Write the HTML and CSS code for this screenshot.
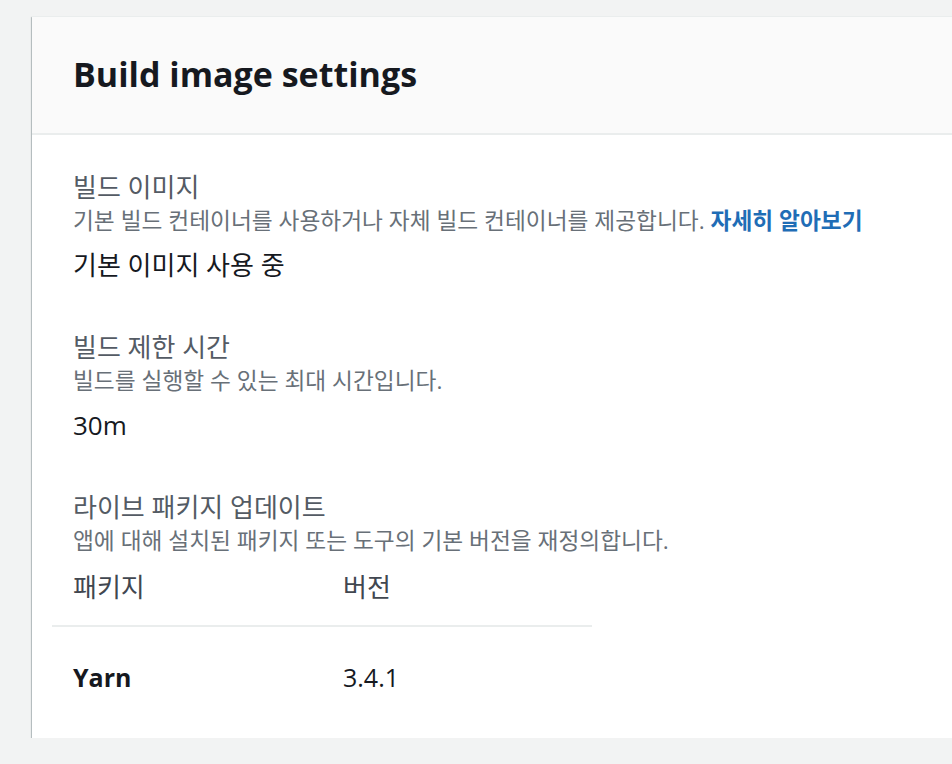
FILE: index.html
```html
<!DOCTYPE html>
<html lang="ko">

<head>
    <meta charset="UTF-8">
    <meta name="viewport" content="width=device-width, initial-scale=1.0">
    <link rel="stylesheet" href="styles.css">
    <title>Build image settings</title>
</head>

<body>
    <section class="panel">
        <div class="panel-header">
            <h2>Build image settings</h2>
        </div>
        <div class="panel-body">
            <div class="field">
                <div class="label">빌드 이미지</div>
                <div class="desc">기본 빌드 컨테이너를 사용하거나 자체 빌드 컨테이너를 제공합니다. <a href="#">자세히 알아보기</a></div>
                <div class="value">기본 이미지 사용 중</div>
            </div>
            <div class="field">
                <div class="label">빌드 제한 시간</div>
                <div class="desc">빌드를 실행할 수 있는 최대 시간입니다.</div>
                <div class="value">30m</div>
            </div>
            <div class="field">
                <div class="label">라이브 패키지 업데이트</div>
                <div class="desc">앱에 대해 설치된 패키지 또는 도구의 기본 버전을 재정의합니다.</div>
                <table class="packages">
                    <thead>
                        <tr>
                            <th>패키지</th>
                            <th>버전</th>
                        </tr>
                    </thead>
                    <tbody>
                        <tr>
                            <td class="name">Yarn</td>
                            <td>3.4.1</td>
                        </tr>
                    </tbody>
                </table>
            </div>
        </div>
    </section>
</body>

</html>
```

FILE: styles.css
```css
* {
    margin: 0;
    padding: 0;
    box-sizing: border-box;
}

html {
    overflow: hidden;
}

body {
    background-color: #f2f3f3;
    font-family: "Open Sans", "Noto Sans CJK KR", sans-serif;
    color: #16191f;
    padding: 16px 0 0 32px;
}

.panel {
    width: 1000px;
    background: #fff;
    border-top: 1px solid #eaeded;
    box-shadow: 0 2px 1px 0 rgba(0, 28, 36, 0.35), -1px 1px 1px 0 rgba(0, 28, 36, 0.2);
}

.panel-header {
    background: #fafafa;
    border-bottom: 2px solid #eaeded;
    height: 118px;
    display: flex;
    align-items: center;
    padding-left: 41px;
}

.panel-header h2 {
    font-size: 34px;
    font-weight: bold;
    color: #16191f;
    padding-bottom: 2px;
}

.panel-body {
    padding: 36px 41px 0;
}

.field + .field {
    margin-top: 50px;
}

.label {
    font-size: 26px;
    line-height: 32px;
    color: #545b64;
}

.desc {
    font-size: 22.7px;
    line-height: 36px;
    color: #687078;
}

.desc a {
    color: #1f6db6;
    font-weight: bold;
    text-decoration: none;
}

.value {
    margin-top: 10px;
    font-size: 26px;
    line-height: 32px;
}

.packages {
    margin-left: -21px;
    border-collapse: collapse;
    width: 540px;
    table-layout: fixed;
}

.packages th {
    text-align: left;
    vertical-align: top;
    font-weight: normal;
    font-size: 26px;
    line-height: 32px;
    color: #414750;
    padding: 12px 21px 22px;
    border-bottom: 2px solid #eaeded;
}

.packages td {
    font-size: 25px;
    line-height: 32px;
    vertical-align: top;
    padding: 34px 21px 45px;
}

.packages td.name {
    font-weight: bold;
}
```
